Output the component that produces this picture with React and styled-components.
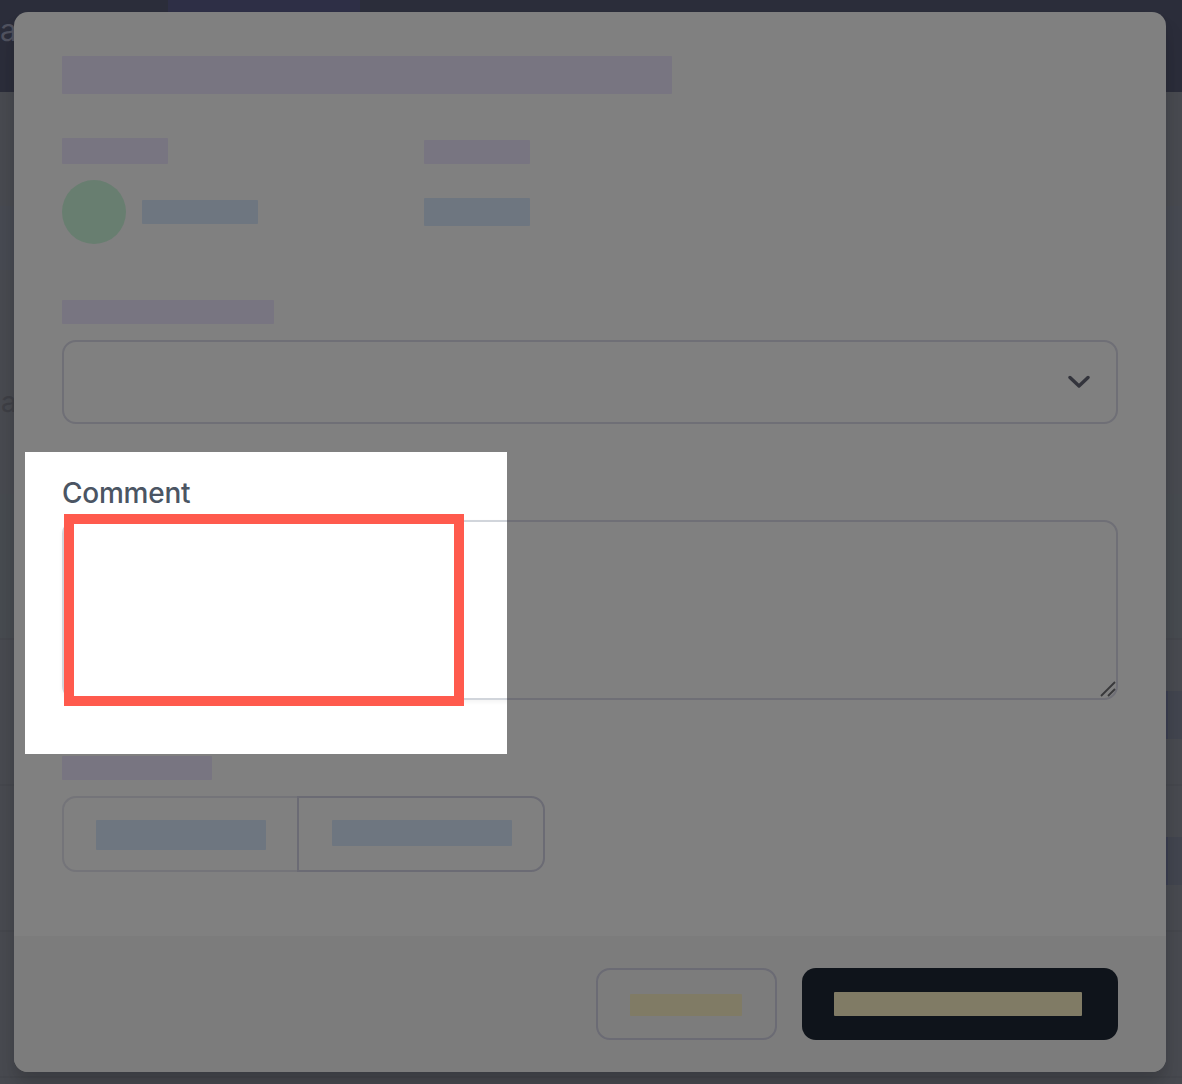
import styled, { createGlobalStyle } from "styled-components";

const GlobalStyle = createGlobalStyle`
  html, body {
    margin: 0;
    padding: 0;
    background: #484a50;
  }
  * {
    box-sizing: border-box;
  }
`;

const tones = {
  label: "#787581",
  value: "#6e7680",
  accent: "#807b65",
};

const rows = [
  { id: 1, tinted: true, pill: false },
  { id: 2, tinted: false, pill: true },
  { id: 3, tinted: false, pill: true },
  { id: 4, tinted: false, pill: false },
];

const App = () => {
  return (
    <Page>
      <GlobalStyle />
      <Header>
        <Brand>a</Brand>
        <NavTab />
      </Header>
      <Band />
      <SectionTitle>a</SectionTitle>
      {rows.map((row) => (
        <TableRow key={row.id} $tinted={row.tinted}>
          {row.pill && <RowPill />}
        </TableRow>
      ))}

      <Modal>
        <ModalBody>
          <Block $w={610} $h={38} $tone="label" />
          <InfoGrid>
            <InfoLabel>
              <Block $w={106} $h={26} $tone="label" />
            </InfoLabel>
            <InfoLabel>
              <Block $w={106} $h={24} $tone="label" />
            </InfoLabel>
            <InfoValue>
              <Avatar />
              <Block $w={116} $h={24} $tone="value" />
            </InfoValue>
            <InfoValue>
              <Block $w={106} $h={28} $tone="value" />
            </InfoValue>
          </InfoGrid>

          <Field>
            <Block $w={212} $h={24} $tone="label" />
            <SelectBox>
              <svg width="22" height="14" viewBox="0 0 22 14" fill="none">
                <path d="M2 2.5 11 11 20 2.5" stroke="#33343c" strokeWidth="3.4" strokeLinecap="round" strokeLinejoin="round" />
              </svg>
            </SelectBox>
          </Field>

          <Field>
            <Block $w={128} $h={24} $tone="label" />
            <TextareaWrap>
              <TextareaBox readOnly />
              <ResizeHandle width="16" height="16" viewBox="0 0 16 16" fill="none">
                <path d="M1 15 15 1M8 15 15 8" stroke="#38383a" strokeWidth="1.8" />
              </ResizeHandle>
            </TextareaWrap>
          </Field>

          <Field>
            <Block $w={150} $h={24} $tone="label" />
            <ToggleGroup>
              <ToggleButton $w={235}>
                <Block $w={170} $h={30} $tone="value" />
              </ToggleButton>
              <ToggleButton $w={248} $active>
                <Block $w={180} $h={26} $tone="value" />
              </ToggleButton>
            </ToggleGroup>
          </Field>
        </ModalBody>

        <ModalFooter>
          <CancelButton>
            <Block $w={112} $h={22} $tone="accent" />
          </CancelButton>
          <SubmitButton>
            <Block $w={248} $h={24} $tone="accent" />
          </SubmitButton>
        </ModalFooter>
      </Modal>

      <Reveal>
        <CommentLabel>Comment</CommentLabel>
        <RevealTextarea />
        <RedFrame />
      </Reveal>
    </Page>
  );
};

const Page = styled.div`
  position: relative;
  width: 100%;
  height: 1084px;
  overflow: hidden;
  background: #484a50;
  font-family: Inter, "Liberation Sans", sans-serif;
`;

const Header = styled.header`
  height: 92px;
  display: flex;
  background: #2b2d3a;
`;

const Brand = styled.div`
  width: 168px;
  padding-top: 10px;
  font-size: 30px;
  line-height: 40px;
  color: #50525f;
`;

const NavTab = styled.div`
  width: 192px;
  background: #2e2f46;
`;

const Band = styled.div`
  height: 64px;
  margin-top: 114px;
  background: #474a52;
`;

const SectionTitle = styled.div`
  height: 112px;
  margin-top: 112px;
  padding-left: 1px;
  font-size: 28px;
  line-height: 40px;
  color: #3e3f45;
`;

const TableRow = styled.div`
  height: 146px;
  display: flex;
  justify-content: flex-end;
  align-items: center;
  border-bottom: 2px solid #45474d;
  background: ${(props) => (props.$tinted ? "#474b50" : "transparent")};
`;

const RowPill = styled.div`
  width: 16px;
  height: 48px;
  margin-top: 5px;
  background: #42454f;
  border-left: 2px solid #3a3d50;
`;

const Modal = styled.div`
  position: absolute;
  top: 12px;
  left: 14px;
  width: 1152px;
  height: 1060px;
  display: flex;
  flex-direction: column;
  border-radius: 14px;
  overflow: hidden;
  background: #808080;
  box-shadow: 0 20px 25px rgba(0, 0, 0, 0.1), 0 8px 10px rgba(0, 0, 0, 0.08);
`;

const ModalBody = styled.div`
  flex: 1;
  padding: 44px 48px 0;
`;

const Block = styled.div`
  flex: none;
  width: ${(props) => props.$w}px;
  height: ${(props) => props.$h}px;
  border-radius: 1px;
  background: ${(props) => tones[props.$tone]};
`;

const InfoGrid = styled.div`
  display: grid;
  grid-template-columns: 362px 1fr;
  grid-template-rows: 26px 64px;
  row-gap: 16px;
  margin-top: 44px;
`;

const InfoLabel = styled.div`
  display: flex;
  align-items: flex-end;
`;

const InfoValue = styled.div`
  display: flex;
  align-items: center;
  gap: 16px;
`;

const Avatar = styled.div`
  width: 64px;
  height: 64px;
  border-radius: 50%;
  background: #687e70;
`;

const Field = styled.div`
  display: flex;
  flex-direction: column;
  gap: 16px;
  margin-top: 56px;
`;

const SelectBox = styled.div`
  height: 84px;
  display: flex;
  justify-content: flex-end;
  align-items: center;
  padding-right: 26px;
  border: 2px solid #6f6f76;
  border-radius: 14px;
`;

const TextareaWrap = styled.div`
  position: relative;
  height: 180px;
`;

const TextareaBox = styled.textarea`
  display: block;
  width: 100%;
  height: 100%;
  padding: 0;
  resize: none;
  outline: none;
  background: transparent;
  border: 2px solid #6f6f76;
  border-radius: 14px;
`;

const ResizeHandle = styled.svg`
  position: absolute;
  right: 2px;
  bottom: 3px;
`;

const ToggleGroup = styled.div`
  display: flex;
  height: 76px;
`;

const ToggleButton = styled.div`
  width: ${(props) => props.$w}px;
  padding: 22px 0 0 ${(props) => (props.$active ? 33 : 32)}px;
  border: 2px solid ${(props) => (props.$active ? "#6b6b74" : "#747479")};
  border-right-width: ${(props) => (props.$active ? 2 : 0)}px;
  border-radius: ${(props) => (props.$active ? "0 14px 14px 0" : "14px 0 0 14px")};
`;

const ModalFooter = styled.div`
  height: 136px;
  display: flex;
  justify-content: flex-end;
  align-items: center;
  gap: 25px;
  padding: 0 48px;
  background: #7c7c7c;
`;

const CancelButton = styled.div`
  width: 181px;
  height: 72px;
  display: flex;
  justify-content: center;
  align-items: center;
  padding: 2px 1px 0 0;
  border: 2px solid #6b6b74;
  border-radius: 14px;
`;

const SubmitButton = styled.div`
  width: 316px;
  height: 72px;
  display: flex;
  justify-content: center;
  align-items: center;
  padding-right: 4px;
  border-radius: 14px;
  background: #0f141b;
`;

const Reveal = styled.div`
  position: absolute;
  top: 452px;
  left: 25px;
  width: 482px;
  height: 302px;
  overflow: hidden;
  padding: 21px 0 0 37px;
  background: #fff;
`;

const CommentLabel = styled.div`
  height: 40px;
  margin-bottom: 7px;
  font-size: 28px;
  font-weight: 500;
  line-height: 40px;
  letter-spacing: -0.25px;
  color: #4b5563;
`;

const RevealTextarea = styled.div`
  width: 1056px;
  height: 180px;
  border: 2px solid #d1d5db;
  border-radius: 14px;
  box-shadow: 0 2px 4px rgba(0, 0, 0, 0.05);
`;

const RedFrame = styled.div`
  position: absolute;
  top: 62px;
  left: 39px;
  width: 400px;
  height: 192px;
  border: 10px solid #ff5a4d;
  background: #fff;
`;

export default App;
